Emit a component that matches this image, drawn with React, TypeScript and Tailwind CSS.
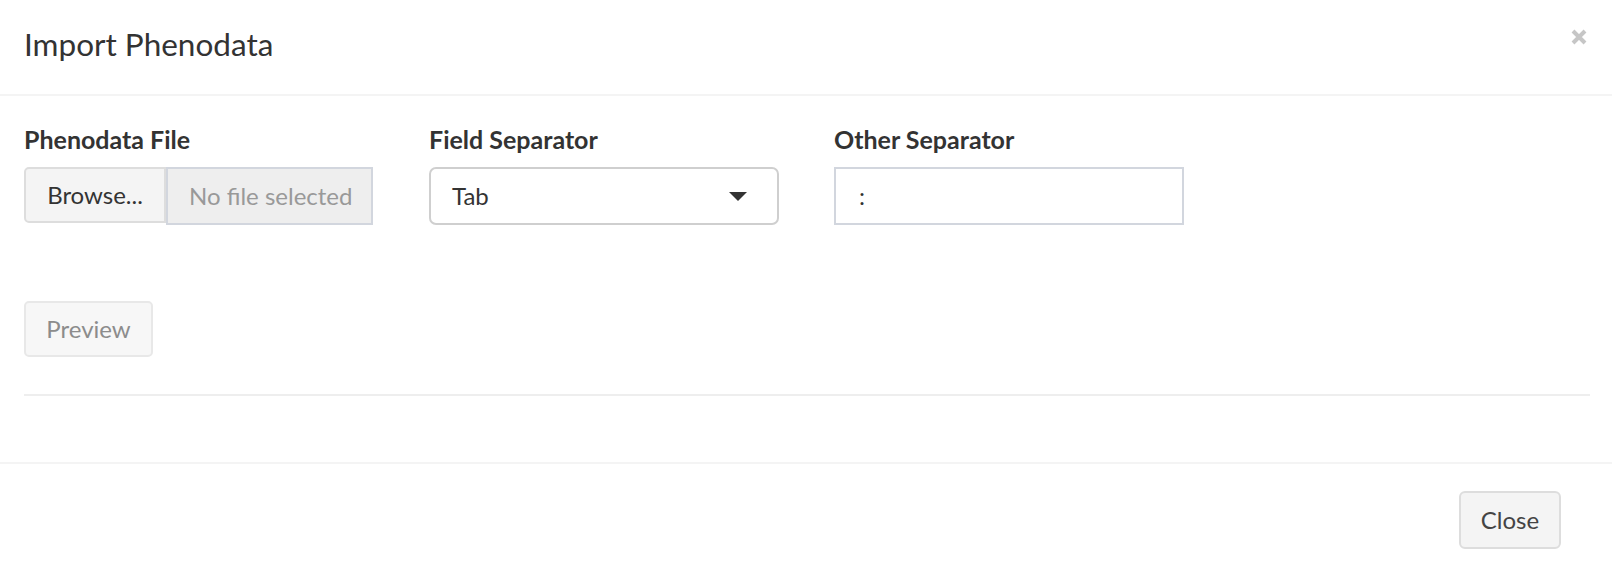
import React from "react";

export default function App() {
  return (
    <div
      className="w-[1612px] h-[566px] bg-white text-[#333] overflow-hidden"
      style={{ fontFamily: "Lato, 'Open Sans', sans-serif" }}
    >
      {/* Header */}
      <div className="h-[96px] border-b-2 border-[#f4f4f4] flex justify-between pl-[24px] pr-[25px]">
        <h4 className="pt-[25px] text-[31.5px] leading-[38px] font-normal text-[#333]">
          Import Phenodata
        </h4>
        <button className="mt-[29px] w-[16px] h-[16px]" aria-label="Close">
          <svg width="16" height="16" viewBox="0 0 16 16">
            <path d="M2 2 L14 14 M14 2 L2 14" stroke="#c6c6c6" strokeWidth="4" strokeLinecap="butt" />
          </svg>
        </button>
      </div>

      {/* Body */}
      <div className="pt-[26px] pl-[24px] pr-[22px] pb-[66px]">
        <div className="flex gap-[55px] items-start">
          <div className="w-[350px]">
            <label className="block text-[25px] leading-[34px] font-bold mb-[11px]">Phenodata File</label>
            <div className="flex items-start">
              <div className="w-[142px] h-[56px] flex items-center justify-center bg-[#f4f4f4] border-2 border-[#dddddd] rounded-l-[5px] text-[24px] text-[#333]">
                Browse...
              </div>
              <div className="w-[207px] h-[58px] flex items-center pl-[21px] bg-[#eeeeee] border-2 border-[#d2d6de] text-[24px] text-[#999]">
                No file selected
              </div>
            </div>
          </div>
          <div className="w-[350px]">
            <label className="block text-[25px] leading-[34px] font-bold mb-[11px]">Field Separator</label>
            <div className="h-[58px] flex items-center justify-between pl-[21px] pr-[30px] border-2 border-[#cfcfcf] rounded-[7px] text-[24px] text-[#333]">
              <span>Tab</span>
              <svg width="18" height="9" viewBox="0 0 18 9">
                <polygon points="0,0 18,0 9,9" fill="#333" />
              </svg>
            </div>
          </div>
          <div className="w-[350px]">
            <label className="block text-[25px] leading-[34px] font-bold mb-[11px]">Other Separator</label>
            <div className="h-[58px] flex items-center pl-[23px] border-2 border-[#d2d6de] text-[24px] text-[#333]">
              :
            </div>
          </div>
        </div>

        <div className="mt-[76px] w-[129px] h-[56px] flex items-center justify-center bg-[#f7f7f7] border-2 border-[#e8e8e8] rounded-[5px] text-[24px] text-[#8c8c8c]">
          Preview
        </div>

        <div className="mt-[37px] h-[2px] bg-[#eeeeee]" />
      </div>

      {/* Footer */}
      <div className="border-t-2 border-[#f4f4f4] flex justify-end pt-[27px] pr-[51px]">
        <div className="w-[102px] h-[58px] flex items-center justify-center bg-[#f4f4f4] border-2 border-[#dddddd] rounded-[6px] text-[24px] text-[#444]">
          Close
        </div>
      </div>
    </div>
  );
}
